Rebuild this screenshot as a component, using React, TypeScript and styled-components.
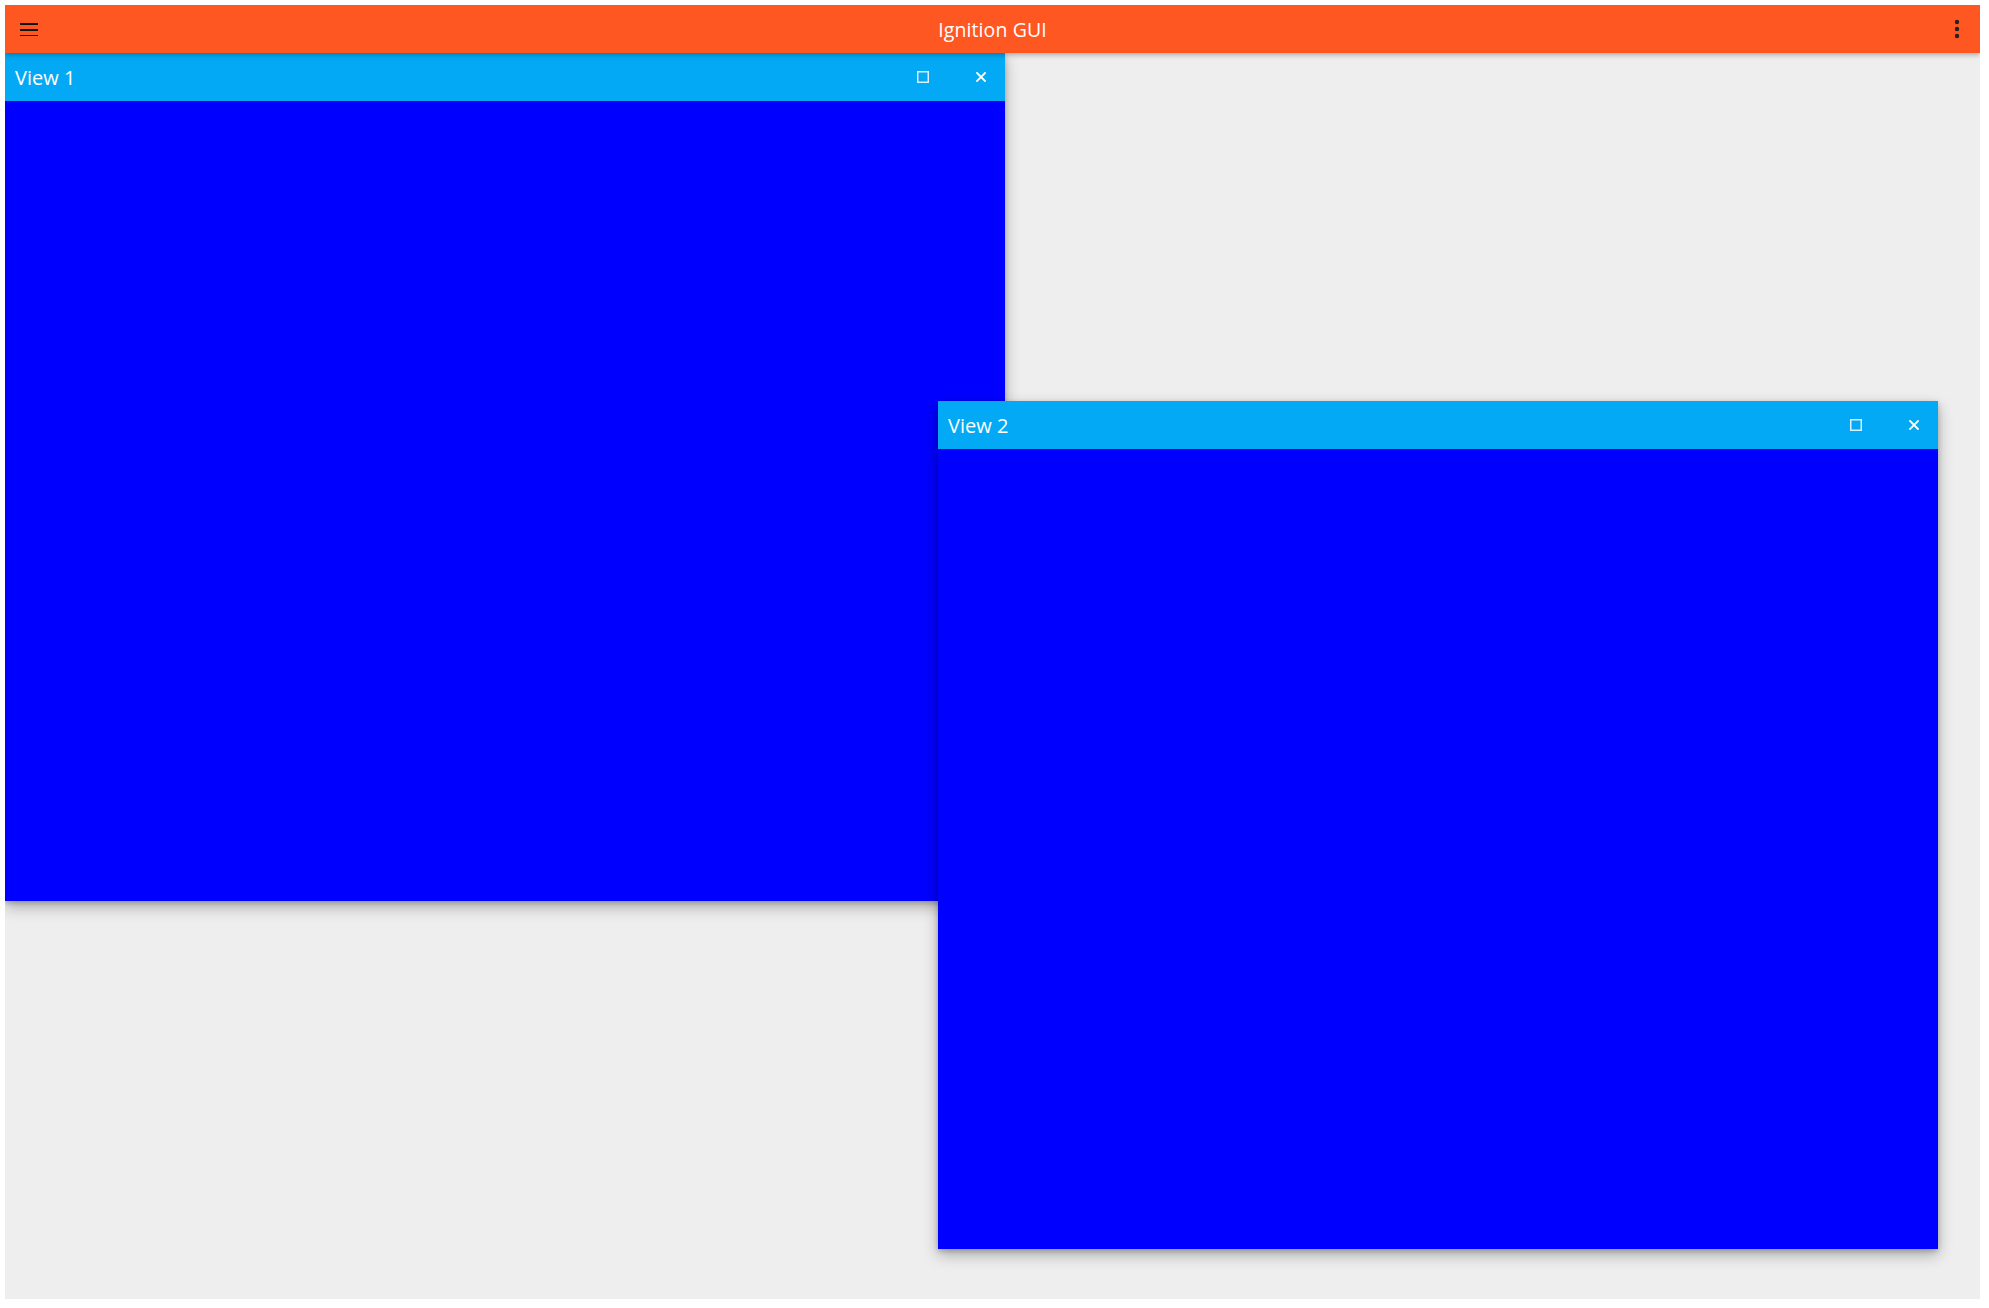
import React from "react";
import styled, { createGlobalStyle } from "styled-components";

const Global = createGlobalStyle`
  html, body { margin: 0; padding: 0; background: #ffffff; }
  body { font-family: "Open Sans", "Noto Sans", sans-serif; }
`;

const Frame = styled.div`
  margin: 5px 9px 9px 5px;
  width: 1975px;
  height: 1294px;
  background: #eeeeee;
  display: flex;
  flex-direction: column;
  overflow: hidden;
`;

const Header = styled.header`
  position: relative;
  z-index: 5;
  height: 48px;
  flex: 0 0 48px;
  background: #ff5722;
  display: flex;
  align-items: center;
  justify-content: space-between;
  padding: 0 11px 0 12px;
  box-sizing: border-box;
  box-shadow: 0 2px 5px rgba(0, 0, 0, 0.28);
`;

const Title = styled.div`
  position: absolute;
  left: 0;
  right: 0;
  text-align: center;
  color: #ffffff;
  font-size: 19.5px;
  letter-spacing: 0.1px;
  pointer-events: none;
`;

const IconButton = styled.button`
  position: relative;
  z-index: 1;
  border: none;
  background: transparent;
  padding: 0;
  width: 24px;
  height: 24px;
  display: flex;
  align-items: center;
  justify-content: center;
`;

const Desktop = styled.div`
  position: relative;
  flex: 1;
`;

const Window = styled.section<{ $x: number; $y: number; $z: number }>`
  position: absolute;
  left: ${(p) => p.$x}px;
  top: ${(p) => p.$y}px;
  z-index: ${(p) => p.$z};
  width: 1000px;
  height: 848px;
  display: flex;
  flex-direction: column;
  box-shadow: 0 6px 14px rgba(0, 0, 0, 0.28), 0 2px 5px rgba(0, 0, 0, 0.2);
`;

const TitleBar = styled.div`
  height: 48px;
  flex: 0 0 48px;
  background: #03a9f4;
  display: flex;
  align-items: center;
  padding-left: 10px;
  padding-right: 1px;
  box-sizing: border-box;
`;

const WindowTitle = styled.span`
  flex: 1;
  color: #ffffff;
  font-size: 20px;
  padding-top: 1px;
`;

const BarButton = styled.button<{ $after?: number }>`
  border: none;
  background: transparent;
  padding: 0;
  width: 46px;
  height: 48px;
  margin-right: ${(p) => p.$after ?? 0}px;
  display: flex;
  align-items: center;
  justify-content: center;
`;

const Body = styled.div`
  flex: 1;
  background: #0000ff;
`;

const MenuIcon = () => (
  <svg width="18" height="14" viewBox="0 0 18 14">
    <rect x="0" y="1" width="18" height="2" fill="#111" />
    <rect x="0" y="7" width="18" height="2" fill="#111" />
    <rect x="0" y="13" width="18" height="2" fill="#111" />
  </svg>
);

const MoreIcon = () => (
  <svg width="8" height="22" viewBox="0 0 8 22">
    <circle cx="4" cy="4" r="2.2" fill="#222" />
    <circle cx="4" cy="11" r="2.2" fill="#222" />
    <circle cx="4" cy="18" r="2.2" fill="#222" />
  </svg>
);

const MaxIcon = () => (
  <svg width="12" height="12" viewBox="0 0 12 12">
    <rect x="0.75" y="0.75" width="10.5" height="10.5" fill="none" stroke="rgba(255,255,255,0.85)" strokeWidth="1.5" />
  </svg>
);

const CloseIcon = () => (
  <svg width="10" height="10" viewBox="0 0 10 10">
    <path d="M1 1L9 9M9 1L1 9" stroke="#ffffff" strokeWidth="1.8" strokeLinecap="square" />
  </svg>
);

const ViewWindow = ({ title, x, y, z }: { title: string; x: number; y: number; z: number }) => (
  <Window $x={x} $y={y} $z={z}>
    <TitleBar>
      <WindowTitle>{title}</WindowTitle>
      <BarButton aria-label="maximize" $after={12}><MaxIcon /></BarButton>
      <BarButton aria-label="close"><CloseIcon /></BarButton>
    </TitleBar>
    <Body />
  </Window>
);

export default function App() {
  return (
    <>
      <Global />
      <Frame>
        <Header>
          <IconButton aria-label="menu"><MenuIcon /></IconButton>
          <Title>Ignition GUI</Title>
          <IconButton aria-label="more"><MoreIcon /></IconButton>
        </Header>
        <Desktop>
          <ViewWindow title="View 1" x={0} y={0} z={1} />
          <ViewWindow title="View 2" x={933} y={348} z={2} />
        </Desktop>
      </Frame>
    </>
  );
}
